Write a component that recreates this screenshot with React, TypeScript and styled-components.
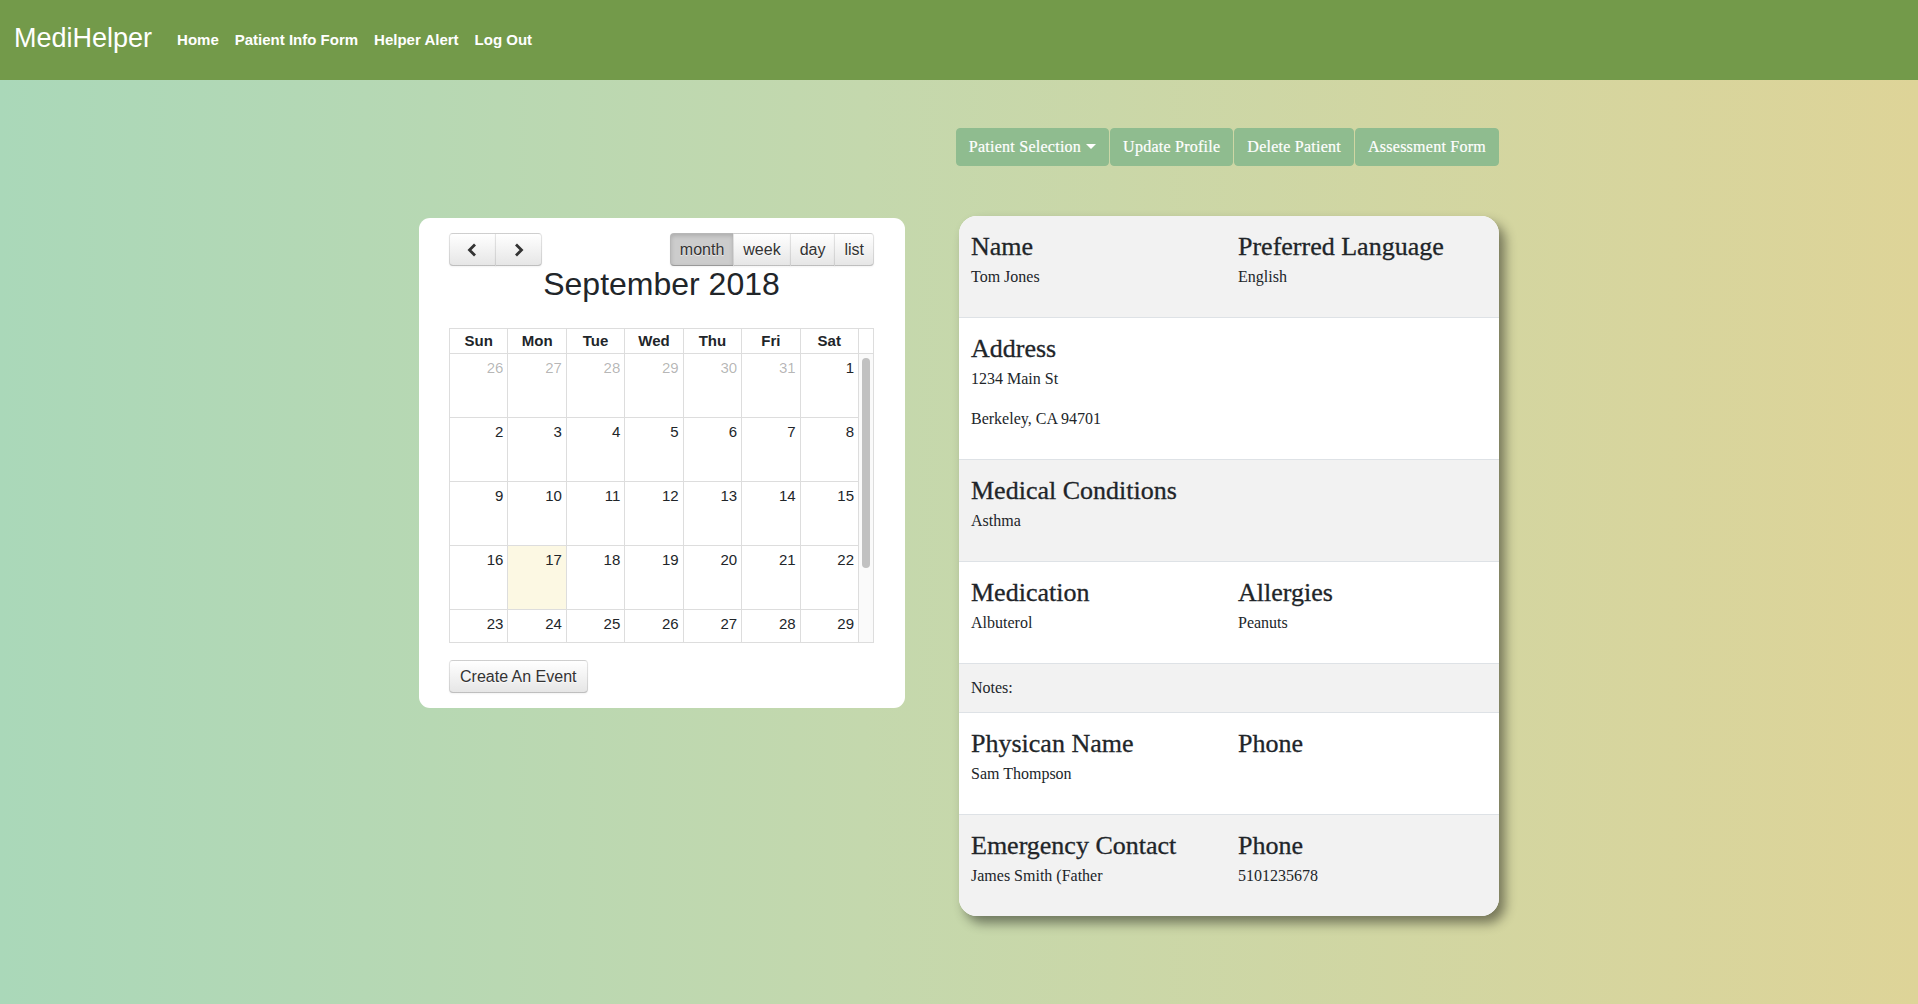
import React from "react";
import styled, { createGlobalStyle } from "styled-components";

const GlobalStyle = createGlobalStyle`
  html, body {
    margin: 0;
    padding: 0;
  }
  body {
    min-height: 100vh;
    overflow: hidden;
    font-family: "Liberation Sans", Arial, sans-serif;
    color: #212529;
    background: linear-gradient(to right, #aad8b9 0%, #c4d8ad 45%, #ded498 100%);
  }
  * {
    box-sizing: border-box;
  }
`;

// only the weeks that show in the scroll area of the month view
const weeks: { day: number; other?: boolean; today?: boolean }[][] = [
  [
    { day: 26, other: true },
    { day: 27, other: true },
    { day: 28, other: true },
    { day: 29, other: true },
    { day: 30, other: true },
    { day: 31, other: true },
    { day: 1 },
  ],
  [2, 3, 4, 5, 6, 7, 8].map((day) => ({ day })),
  [9, 10, 11, 12, 13, 14, 15].map((day) => ({ day })),
  [16, 17, 18, 19, 20, 21, 22].map((day) => ({ day, today: day === 17 })),
  [23, 24, 25, 26, 27, 28, 29].map((day) => ({ day })),
];

const dayNames = ["Sun", "Mon", "Tue", "Wed", "Thu", "Fri", "Sat"];

const ChevronLeft = () => (
  <svg width="11" height="14" viewBox="0 0 11 14">
    <polyline points="8,1.5 2.5,7 8,12.5" fill="none" stroke="#333" strokeWidth="2.8" />
  </svg>
);

const ChevronRight = () => (
  <svg width="11" height="14" viewBox="0 0 11 14">
    <polyline points="3,1.5 8.5,7 3,12.5" fill="none" stroke="#333" strokeWidth="2.8" />
  </svg>
);

export default function App() {
  return (
    <>
      <GlobalStyle />
      <Navbar>
        <Brand>MediHelper</Brand>
        <NavLinks>
          <NavLink>Home</NavLink>
          <NavLink>Patient Info Form</NavLink>
          <NavLink>Helper Alert</NavLink>
          <NavLink>Log Out</NavLink>
        </NavLinks>
      </Navbar>

      <Page>
        <Toolbar>
          <ActionButton>
            Patient Selection
            <Caret />
          </ActionButton>
          <ActionButton>Update Profile</ActionButton>
          <ActionButton>Delete Patient</ActionButton>
          <ActionButton>Assessment Form</ActionButton>
        </Toolbar>

        <CalendarCard>
          <CalendarToolbar>
            <ButtonGroup>
              <CalButton $wide>
                <ChevronLeft />
              </CalButton>
              <CalButton $wide>
                <ChevronRight />
              </CalButton>
            </ButtonGroup>
            <ButtonGroup>
              <CalButton $active>month</CalButton>
              <CalButton>week</CalButton>
              <CalButton>day</CalButton>
              <CalButton>list</CalButton>
            </ButtonGroup>
          </CalendarToolbar>
          <CalendarTitle>September 2018</CalendarTitle>

          <Grid>
            <HeadRow>
              {dayNames.map((d) => (
                <HeadCell key={d}>{d}</HeadCell>
              ))}
              <Gutter />
            </HeadRow>
            <Body>
              <Days>
                {weeks.map((week, i) =>
                  week.map((c, j) => (
                    <DayCell key={`${i}-${j}`} $today={c.today}>
                      <DayNumber $other={c.other}>{c.day}</DayNumber>
                    </DayCell>
                  ))
                )}
              </Days>
              <ScrollTrack>
                <ScrollThumb />
              </ScrollTrack>
            </Body>
          </Grid>

          <CalButton $plain>Create An Event</CalButton>
        </CalendarCard>

        <PatientCard>
          <InfoRow>
            <Field>
              <Label>Name</Label>
              <Value>Tom Jones</Value>
            </Field>
            <Field>
              <Label>Preferred Language</Label>
              <Value>English</Value>
            </Field>
          </InfoRow>
          <InfoRow>
            <Field>
              <Label>Address</Label>
              <Value>1234 Main St</Value>
              <Value>Berkeley, CA 94701</Value>
            </Field>
          </InfoRow>
          <InfoRow>
            <Field>
              <Label>Medical Conditions</Label>
              <Value>Asthma</Value>
            </Field>
          </InfoRow>
          <InfoRow>
            <Field>
              <Label>Medication</Label>
              <Value>Albuterol</Value>
            </Field>
            <Field>
              <Label>Allergies</Label>
              <Value>Peanuts</Value>
            </Field>
          </InfoRow>
          <InfoRow>
            <Notes>Notes:</Notes>
          </InfoRow>
          <InfoRow>
            <Field>
              <Label>Physican Name</Label>
              <Value>Sam Thompson</Value>
            </Field>
            <Field>
              <Label>Phone</Label>
            </Field>
          </InfoRow>
          <InfoRow>
            <Field>
              <Label>Emergency Contact</Label>
              <Value>James Smith (Father</Value>
            </Field>
            <Field>
              <Label>Phone</Label>
              <Value>5101235678</Value>
            </Field>
          </InfoRow>
        </PatientCard>
      </Page>
    </>
  );
}

//--------- Navbar -----------//

const Navbar = styled.nav`
  height: 80px;
  background-color: #739a4a;
  display: flex;
  align-items: center;
  padding: 0 0 3px 14px;
`;

const Brand = styled.div`
  color: #fff;
  font-size: 27px;
  margin-right: 25px;
`;

const NavLinks = styled.div`
  display: flex;
  gap: 16px;
  padding-top: 2px;
`;

const NavLink = styled.a`
  color: #fff;
  font-size: 15px;
  font-weight: bold;
  cursor: pointer;
`;

//--------- Page layout -----------//

const Page = styled.main`
  width: 1080px;
  margin: 48px auto 0;
  display: grid;
  grid-template-columns: 486px 540px;
  column-gap: 54px;
  row-gap: 50px;
  align-items: start;
`;

const Toolbar = styled.div`
  grid-column: 2;
  display: flex;
  justify-content: flex-end;
  gap: 1px;
`;

const ActionButton = styled.button`
  flex-shrink: 0;
  white-space: nowrap;
  font-family: "Liberation Serif", "Times New Roman", serif;
  font-size: 16px;
  letter-spacing: 0.25px;
  line-height: 24px;
  padding: 6px 12px;
  color: #fff;
  -webkit-text-stroke: 0.2px #fff;
  background-color: #8fbc8f;
  border: 1px solid #8fbc8f;
  border-radius: 4px;
  display: flex;
  align-items: center;
`;

const Caret = styled.span`
  display: inline-block;
  margin-left: 5px;
  margin-top: -2px;
  border-top: 5px solid #fff;
  border-left: 5px solid transparent;
  border-right: 5px solid transparent;
`;

//--------- Calendar -----------//

const CalendarCard = styled.section`
  grid-column: 1;
  grid-row: 2;
  margin-top: 2px;
  background: #fff;
  border-radius: 11px;
  padding: 15px 31px 15px 30px;
`;

const CalendarToolbar = styled.div`
  display: flex;
  justify-content: space-between;
`;

const ButtonGroup = styled.div`
  display: flex;
  & > button + button {
    margin-left: -1px;
  }
  & > button {
    border-radius: 0;
  }
  & > button:first-child {
    border-radius: 4px 0 0 4px;
  }
  & > button:last-child {
    border-radius: 0 4px 4px 0;
  }
`;

const CalButton = styled.button<{ $active?: boolean; $wide?: boolean; $plain?: boolean }>`
  height: 33px;
  padding: 0 ${({ $plain }) => ($plain ? "10px" : "9px")};
  width: ${({ $wide }) => ($wide ? "47px" : "auto")};
  display: flex;
  align-items: center;
  justify-content: center;
  white-space: nowrap;
  font-family: "Liberation Sans", Arial, sans-serif;
  font-size: 16px;
  color: #333;
  text-shadow: 0 1px 1px rgba(255, 255, 255, 0.75);
  border: 1px solid;
  border-color: rgba(0, 0, 0, 0.1) rgba(0, 0, 0, 0.1) rgba(0, 0, 0, 0.25);
  border-radius: 4px;
  background-color: ${({ $active }) => ($active ? "#cccccc" : "#f5f5f5")};
  background-image: ${({ $active }) =>
    $active ? "none" : "linear-gradient(to bottom, #ffffff, #e6e6e6)"};
  box-shadow: ${({ $active }) =>
    $active
      ? "inset 0 2px 4px rgba(0,0,0,0.15), 0 1px 2px rgba(0,0,0,0.05)"
      : "inset 0 1px 0 rgba(255,255,255,0.2), 0 1px 2px rgba(0,0,0,0.05)"};
  margin-top: ${({ $plain }) => ($plain ? "17px" : "0")};
`;

const CalendarTitle = styled.h2`
  margin: 0 0 25px;
  text-align: center;
  font-weight: normal;
  font-size: 32px;
  line-height: 37px;
  color: #212529;
`;

const Grid = styled.div`
  border: 1px solid #ddd;
`;

const HeadRow = styled.div`
  display: grid;
  grid-template-columns: repeat(7, 1fr) 14px;
  height: 25px;
  border-bottom: 1px solid #ddd;
`;

const HeadCell = styled.div`
  border-right: 1px solid #ddd;
  font-size: 15px;
  font-weight: bold;
  text-align: center;
  line-height: 24px;
`;

const Gutter = styled.div``;

const Body = styled.div`
  height: 288px;
  display: flex;
  overflow: hidden;
`;

const Days = styled.div`
  flex: 1;
  display: grid;
  grid-template-columns: repeat(7, 1fr);
  grid-auto-rows: 64px;
  align-content: start;
`;

const ScrollTrack = styled.div`
  width: 14px;
  flex-shrink: 0;
  background: #fafafa;
  padding: 4px 3px 0 3px;
`;

const ScrollThumb = styled.div`
  height: 210px;
  border-radius: 4px;
  background: #c1c1c1;
`;

const DayCell = styled.div<{ $today?: boolean }>`
  border-right: 1px solid #ddd;
  border-bottom: 1px solid #ddd;
  background: ${({ $today }) => ($today ? "#fcf8e3" : "transparent")};
  text-align: right;
  padding: 5px 4px 0;
`;

const DayNumber = styled.span<{ $other?: boolean }>`
  font-size: 15px;
  color: ${({ $other }) => ($other ? "rgba(0,0,0,0.3)" : "#212529")};
`;

//--------- Patient card -----------//

const PatientCard = styled.section`
  grid-column: 2;
  grid-row: 2;
  border-radius: 18px;
  overflow: hidden;
  background: #fff;
  box-shadow: 6px 7px 12px rgba(0, 0, 0, 0.45);
  font-family: "Liberation Serif", "Times New Roman", serif;
  color: #212529;
`;

const InfoRow = styled.div`
  display: grid;
  grid-template-columns: 267px 1fr;
  padding: 12px 12px 0;
  border-top: 1px solid #dee2e6;

  &:first-child {
    border-top: none;
  }
  &:nth-child(odd) {
    background: #f2f2f2;
  }
`;

const Field = styled.div`
  padding-bottom: 12px;
`;

const Label = styled.h3`
  margin: 0;
  font-size: 26px;
  font-weight: normal;
  line-height: 37px;
  -webkit-text-stroke: 0.3px #212529;
`;

const Value = styled.p`
  margin: 0 0 16px;
  font-size: 16px;
  line-height: 24px;
`;

const Notes = styled.p`
  margin: 0 0 12px;
  font-size: 16px;
  line-height: 24px;
`;
